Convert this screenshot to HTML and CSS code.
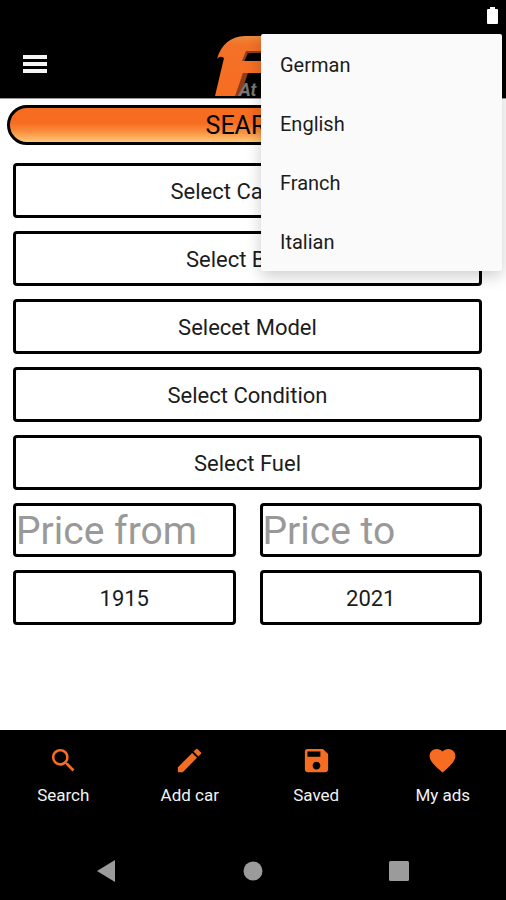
FILE: index.html
```html
<!DOCTYPE html>
<html lang="en">
<head>
<meta charset="utf-8">
<meta name="viewport" content="width=device-width, initial-scale=1">
<title>Car search</title>
<link rel="stylesheet" href="styles.css">
</head>
<body>
<div class="status">
  <svg class="battery" viewBox="0 0 11 17" aria-hidden="true"><path fill="#fff" d="M3 0h5v2h2q1 0 1 1v13q0 1-1 1H1q-1 0-1-1V3q0-1 1-1h2z"/></svg>
</div>
<header class="appbar">
  <button class="menu-button" type="button" aria-label="Menu">
    <svg viewBox="0 0 24 18" aria-hidden="true"><path fill="#f4f4f4" d="M0 0h24v4H0zM0 7h24v4H0zM0 14h24v4H0z"/></svg>
  </button>
  <svg class="logo" viewBox="0 0 78 62" role="img" aria-label="Logo">
    <defs>
      <linearGradient id="flame" x1="0" y1="0" x2="0" y2="1">
        <stop offset="0" stop-color="#e88a3c"/>
        <stop offset=".15" stop-color="#f47128"/>
        <stop offset="1" stop-color="#f66d22"/>
      </linearGradient>
    </defs>
    <path fill="#8e3d18" d="M29 37h5l-8 23h-7zM30 15h46v2H34l-4 9h-3z"/>
    <path fill="url(#flame)" d="M3 23Q9 1 31 0H78L74 15H32L28 25H72L69 37H29L21 60H1L10 22Q6 19 3 23Z"/>
    <text x="25" y="60" class="logo-text">At</text>
  </svg>
</header>
<main class="content">
  <button class="search" type="submit" form="filters">SEARCH</button>
  <form class="filters" id="filters">
    <select class="field" aria-label="Category"><option>Select Category</option></select>
    <select class="field" aria-label="Brand"><option>Select Brand</option></select>
    <select class="field" aria-label="Model"><option>Selecet Model</option></select>
    <select class="field" aria-label="Condition"><option>Select Condition</option></select>
    <select class="field" aria-label="Fuel"><option>Select Fuel</option></select>
    <div class="pair">
      <input class="field price" type="text" inputmode="numeric" placeholder="Price from" aria-label="Price from">
      <input class="field price" type="text" inputmode="numeric" placeholder="Price to" aria-label="Price to">
    </div>
    <div class="pair">
      <select class="field" aria-label="Year from"><option>1915</option></select>
      <select class="field" aria-label="Year to"><option>2021</option></select>
    </div>
  </form>
</main>
<nav class="tabs">
  <a class="tab" href="#search"><svg viewBox="0 0 24 24" aria-hidden="true"><path d="M15.5 14h-.79l-.28-.27A6.47 6.47 0 0 0 16 9.5 6.5 6.5 0 1 0 9.5 16c1.61 0 3.09-.59 4.23-1.57l.27.28v.79l5 4.99L20.49 19l-4.99-5zm-6 0C7.01 14 5 11.99 5 9.5S7.01 5 9.5 5 14 7.01 14 9.5 11.99 14 9.5 14z"/></svg>Search</a>
  <a class="tab" href="#add"><svg viewBox="0 0 24 24" aria-hidden="true"><path d="M3 17.25V21h3.75L17.81 9.94l-3.75-3.75L3 17.25zM20.71 7.04a1 1 0 0 0 0-1.41l-2.34-2.34a1 1 0 0 0-1.41 0l-1.83 1.83 3.75 3.75 1.83-1.83z"/></svg>Add car</a>
  <a class="tab" href="#saved"><svg viewBox="0 0 24 24" aria-hidden="true"><path d="M17 3H5a2 2 0 0 0-2 2v14c0 1.1.89 2 2 2h14c1.1 0 2-.9 2-2V7l-4-4zm-5 16c-1.66 0-3-1.34-3-3s1.34-3 3-3 3 1.34 3 3-1.34 3-3 3zm3-10H5V5h10v4z"/></svg>Saved</a>
  <a class="tab" href="#ads"><svg viewBox="0 0 24 24" aria-hidden="true"><path d="M12 21.35l-1.45-1.32C5.4 15.36 2 12.28 2 8.5 2 5.42 4.42 3 7.5 3c1.74 0 3.41.81 4.5 2.09C13.09 3.81 14.76 3 16.5 3 19.58 3 22 5.42 22 8.5c0 3.78-3.4 6.86-8.55 11.54L12 21.35z"/></svg>My ads</a>
</nav>
<div class="system">
  <button type="button" aria-label="Back"><svg viewBox="0 0 22 22" aria-hidden="true"><path d="M19 0v22L1 11z"/></svg></button>
  <button type="button" aria-label="Home"><svg viewBox="0 0 22 22" aria-hidden="true"><circle cx="11" cy="11" r="9.5"/></svg></button>
  <button type="button" aria-label="Recent apps"><svg viewBox="0 0 22 22" aria-hidden="true"><rect x="1" y="1" width="20" height="20" rx="1.5"/></svg></button>
</div>
<div class="languages" role="menu">
  <button type="button" role="menuitem">German</button>
  <button type="button" role="menuitem">English</button>
  <button type="button" role="menuitem">Franch</button>
  <button type="button" role="menuitem">Italian</button>
</div>
</body>
</html>
```

FILE: styles.css
```css
* {
  box-sizing: border-box;
}

body {
  margin: 0;
  min-height: 100vh;
  display: flex;
  flex-direction: column;
  position: relative;
  background: #fff;
  font-family: Roboto, sans-serif;
  color: #1c1c1c;
}

button,
input,
select {
  font: inherit;
  color: inherit;
  margin: 0;
}

button {
  border: 0;
  padding: 0;
  background: none;
}

svg {
  display: block;
}

.status {
  display: flex;
  justify-content: flex-end;
  height: 30px;
  padding: 7px 8px 0;
  background: #000;
}

.battery {
  width: 11px;
  height: 17px;
}

.appbar {
  display: grid;
  grid-template-columns: 1fr auto 1fr;
  align-items: center;
  height: 69px;
  padding: 0 23px;
  border-bottom: 1px solid #999;
  background: #000;
}

.menu-button {
  justify-self: start;
}

.menu-button svg {
  width: 24px;
  height: 18px;
}

.logo {
  width: 78px;
  height: 62px;
  margin-top: 6px;
}

.logo-text {
  font: italic bold 18px Roboto, sans-serif;
  fill: #77777a;
}

.content {
  flex: 1;
  padding: 6px 7px;
}

.search {
  display: block;
  width: 100%;
  height: 40px;
  padding-top: 1px;
  border: 3px solid #000;
  border-radius: 20px;
  background: linear-gradient(#f66d22 0%, #f66d22 45%, #f98f3e 70%, #ffc877 100%);
  color: #000;
  font-size: 25px;
}

.filters {
  display: flex;
  flex-direction: column;
  gap: 13px;
  padding: 18px 17px 0 6px;
}

.field {
  appearance: none;
  width: 100%;
  height: 55px;
  padding: 2px 0 0;
  border: 3px solid #000;
  border-radius: 4px;
  background: #fff;
  font-size: 22px;
  text-align: center;
  text-align-last: center;
}

.pair {
  display: grid;
  grid-template-columns: 1fr 1fr;
  gap: 24px;
}

.price {
  height: 54px;
  font-size: 39px;
  text-align: left;
  text-align-last: left;
}

.price::placeholder {
  color: #999;
  opacity: 1;
}

.tabs {
  display: grid;
  grid-template-columns: repeat(4, 1fr);
  padding-top: 15px;
  height: 112px;
  background: #000;
}

.tab {
  display: flex;
  flex-direction: column;
  align-items: center;
  gap: 8px;
  color: #f2f2f2;
  font-size: 17px;
  line-height: 22px;
  text-decoration: none;
}

.tab svg {
  width: 31px;
  height: 31px;
  fill: #f66d22;
}

.system {
  display: flex;
  justify-content: center;
  align-items: center;
  gap: 124px;
  height: 58px;
  background: #000;
}

.system svg {
  width: 22px;
  height: 22px;
  fill: #9b9b9b;
}

.languages {
  position: absolute;
  top: 34px;
  right: 4px;
  width: 241px;
  display: flex;
  flex-direction: column;
  padding-bottom: 1px;
  border-radius: 2px;
  background: #fafafa;
  box-shadow: 0 5px 16px rgba(0, 0, 0, 0.2);
}

.languages button {
  height: 59px;
  padding: 2px 19px 0;
  font-size: 20px;
  text-align: left;
}
```
